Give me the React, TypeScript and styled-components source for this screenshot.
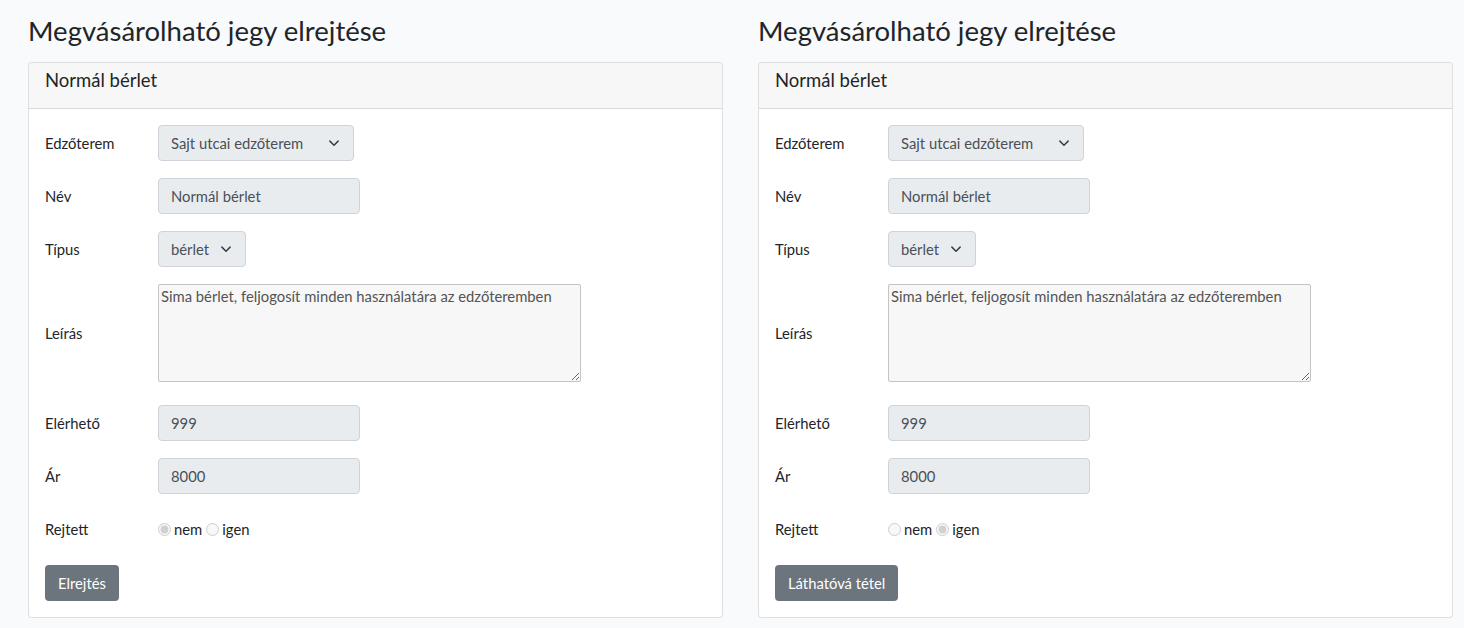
import styled, { createGlobalStyle } from 'styled-components'

const GlobalStyle = createGlobalStyle`
  html, body {
    margin: 0;
    padding: 0;
    background: #f8fafc;
  }
  body {
    font-family: Lato, "Noto Sans", sans-serif;
    font-size: 14.8px;
    color: #212529;
  }
`

type Ticket = {
  title: string
  gym: string
  name: string
  type: string
  description: string
  available: string
  price: string
  hidden: boolean
  action: string
}

const tickets: Ticket[] = [
  {
    title: 'Normál bérlet',
    gym: 'Sajt utcai edzőterem',
    name: 'Normál bérlet',
    type: 'bérlet',
    description: 'Sima bérlet, feljogosít minden használatára az edzőteremben',
    available: '999',
    price: '8000',
    hidden: false,
    action: 'Elrejtés',
  },
  {
    title: 'Normál bérlet',
    gym: 'Sajt utcai edzőterem',
    name: 'Normál bérlet',
    type: 'bérlet',
    description: 'Sima bérlet, feljogosít minden használatára az edzőteremben',
    available: '999',
    price: '8000',
    hidden: true,
    action: 'Láthatóvá tétel',
  },
]

const Chevron = () => (
  <svg width="12" height="12" viewBox="0 0 16 16" fill="none">
    <path d="M2.5 5.5 8 11 13.5 5.5" stroke="#343a40" strokeWidth="1.9" strokeLinecap="round" strokeLinejoin="round" />
  </svg>
)

const TicketForm = ({ ticket }: { ticket: Ticket }) => (
  <Column>
    <Title>Megvásárolható jegy elrejtése</Title>
    <Card>
      <CardHeader>{ticket.title}</CardHeader>
      <CardBody>
        <Row>
          <Label>Edzőterem</Label>
          <SelectBox $width={196}>
            <span>{ticket.gym}</span>
            <Chevron />
          </SelectBox>
        </Row>
        <Row>
          <Label>Név</Label>
          <Input disabled value={ticket.name} readOnly />
        </Row>
        <Row>
          <Label>Típus</Label>
          <SelectBox $width={88}>
            <span>{ticket.type}</span>
            <Chevron />
          </SelectBox>
        </Row>
        <Row $tall>
          <Label>Leírás</Label>
          <TextArea disabled value={ticket.description} readOnly />
        </Row>
        <Row>
          <Label>Elérhető</Label>
          <Input disabled value={ticket.available} readOnly />
        </Row>
        <Row>
          <Label>Ár</Label>
          <Input disabled value={ticket.price} readOnly />
        </Row>
        <Row $last>
          <Label>Rejtett</Label>
          <Radios>
            <RadioLabel>
              <input type="radio" disabled checked={!ticket.hidden} readOnly />
              nem
            </RadioLabel>
            <RadioLabel>
              <input type="radio" disabled checked={ticket.hidden} readOnly />
              igen
            </RadioLabel>
          </Radios>
        </Row>
        <Button type="button">{ticket.action}</Button>
      </CardBody>
    </Card>
  </Column>
)

export default function App() {
  return (
    <>
      <GlobalStyle />
      <Page>
        {tickets.map((t, i) => (
          <TicketForm key={i} ticket={t} />
        ))}
      </Page>
    </>
  )
}

const Page = styled.main`
  display: grid;
  grid-template-columns: 695px 695px;
  column-gap: 35px;
  padding: 13px 11px 0 28px;
  min-height: 628px;
  box-sizing: border-box;
`

const Column = styled.section`
  display: flex;
  flex-direction: column;
`

const Title = styled.h3`
  margin: 0 0 13px;
  font-size: 27.5px;
  font-weight: 400;
  line-height: 36px;
  color: #212529;
`

const Card = styled.div`
  background: #fff;
  border: 1px solid rgba(0, 0, 0, 0.125);
  border-radius: 4px;
`

const CardHeader = styled.div`
  box-sizing: border-box;
  height: 46px;
  padding: 6px 16px 0;
  line-height: 22px;
  font-size: 18.5px;
  background: #f7f7f7;
  border-bottom: 1px solid rgba(0, 0, 0, 0.125);
  border-radius: 4px 4px 0 0;
`

const CardBody = styled.div`
  padding: 16px 16px 16px;
`

const Row = styled.div<{ $tall?: boolean; $last?: boolean }>`
  display: flex;
  align-items: center;
  min-height: 36px;
  margin-bottom: ${p => (p.$tall ? '23px' : p.$last ? '18px' : '17px')};
`

const Label = styled.label`
  width: 113px;
  flex-shrink: 0;
`

const fieldBase = `
  box-sizing: border-box;
  height: 36px;
  border: 1px solid #ced4da;
  border-radius: 4px;
  background: #e9ecef;
  color: #495057;
  font-family: Lato, "Noto Sans", sans-serif;
  font-size: 14.8px;
  padding: 0 12px;
`

const SelectBox = styled.div<{ $width: number }>`
  ${fieldBase}
  width: ${p => p.$width}px;
  display: flex;
  align-items: center;
  justify-content: space-between;
  padding-right: 13px;
`

const Input = styled.input`
  ${fieldBase}
  width: 202px;
  opacity: 1;
`

const TextArea = styled.textarea`
  box-sizing: border-box;
  width: 423px;
  height: 98px;
  border: 1px solid #c4c4c4;
  border-radius: 2px;
  background: #f7f7f7;
  color: #545454;
  font-family: Lato, "Noto Sans", sans-serif;
  font-size: 14.8px;
  line-height: 1.2;
  padding: 3px 2px;
`

const Radios = styled.div`
  display: flex;
  align-items: center;
  gap: 4px;
`

const RadioLabel = styled.label`
  display: flex;
  align-items: center;
  gap: 3px;

  input {
    margin: 0;
    width: 13px;
    height: 13px;
  }
`

const Button = styled.button`
  display: block;
  height: 36px;
  padding: 0 13px;
  border: none;
  border-radius: 4px;
  background: #6c757d;
  color: #fff;
  font-family: Lato, "Noto Sans", sans-serif;
  font-size: 14.8px;
  cursor: pointer;
`
